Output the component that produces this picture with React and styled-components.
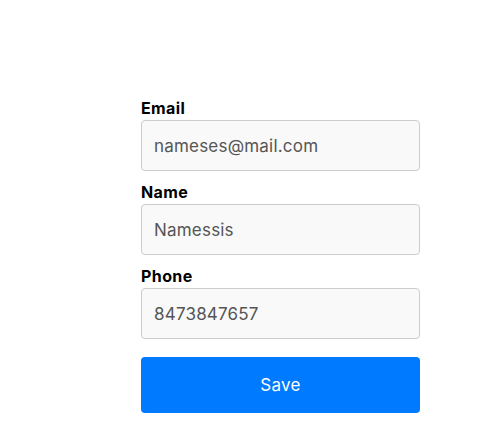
import styled, { createGlobalStyle } from "styled-components";

const GlobalStyle = createGlobalStyle`
  html, body {
    margin: 0;
    padding: 0;
    background: #ffffff;
    font-family: "Inter", "Noto Sans", sans-serif;
  }
`;

const Page = styled.div`
  width: 479px;
  height: 439px;
  padding: 96px 0 0 141px;
  box-sizing: border-box;
`;

const Form = styled.form`
  width: 279px;
  display: flex;
  flex-direction: column;
`;

const Field = styled.div`
  display: flex;
  flex-direction: column;
  margin-bottom: ${({ last }) => (last ? "18px" : "9px")};
`;

const Label = styled.label`
  font-size: 16px;
  font-weight: 700;
  letter-spacing: 0.4px;
  line-height: 24px;
  color: #000;
`;

const Input = styled.input`
  box-sizing: border-box;
  height: 51px;
  width: 100%;
  padding: 0 12px;
  font-family: inherit;
  font-size: 17px;
  letter-spacing: 0.2px;
  color: #555;
  background: #f9f9f9;
  border: 1px solid #cccccc;
  border-radius: 4px;
  outline: none;
`;

const SaveButton = styled.button`
  height: 56px;
  width: 100%;
  border: none;
  border-radius: 4px;
  background: #007bff;
  color: #fff;
  font-family: inherit;
  font-size: 17px;
  letter-spacing: 0.3px;
  cursor: pointer;
`;

const fields = [
  { label: "Email", value: "nameses@mail.com" },
  { label: "Name", value: "Namessis" },
  { label: "Phone", value: "8473847657" },
];

export default function App() {
  return (
    <>
      <GlobalStyle />
      <Page>
        <Form onSubmit={(e) => e.preventDefault()}>
          {fields.map(({ label, value }, index) => (
            <Field key={label} last={index === fields.length - 1}>
              <Label>{label}</Label>
              <Input defaultValue={value} />
            </Field>
          ))}
          <SaveButton type="submit">Save</SaveButton>
        </Form>
      </Page>
    </>
  );
}
